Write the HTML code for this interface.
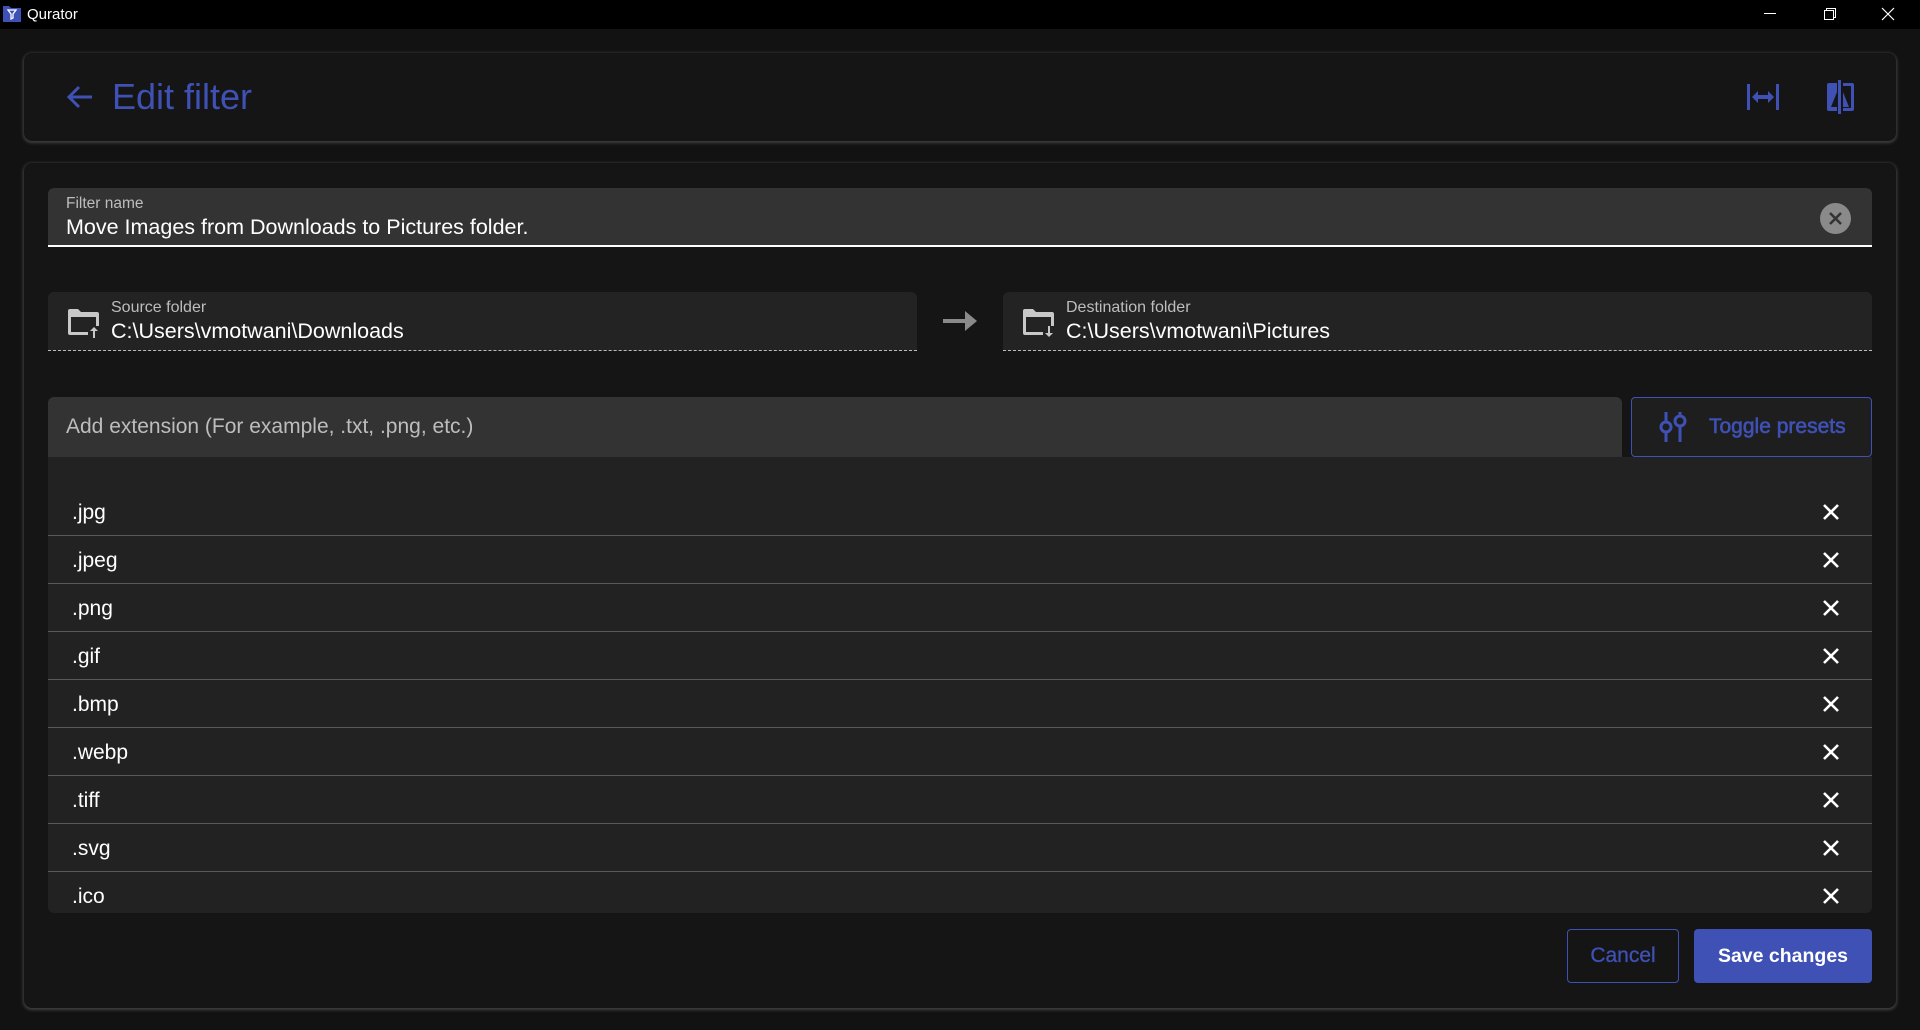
<!DOCTYPE html>
<html><head><meta charset="utf-8"><style>
*{box-sizing:border-box;margin:0;padding:0}
body{width:1920px;height:1030px;background:#121212;font-family:"Liberation Sans",sans-serif;color:#fff;position:relative;overflow:hidden}
.abs{position:absolute}
.tb{left:0;top:0;width:1920px;height:29px;background:#000}
.card{background:#151515;border-radius:8px;box-shadow:0 1px 3px 1px rgba(255,255,255,.2)}
.lbl{font-size:16px;color:#bdbdbd}
.val{font-size:21.5px;color:#fff}
.row{position:absolute;left:48px;width:1824px;height:48px;border-bottom:1px solid #5a5a5a}
.row span{position:absolute;left:24px;top:13px;font-size:21px}
.row svg{position:absolute;right:32px;top:15px}
</style></head><body>
<div class="abs tb"></div>
<svg class="abs" style="left:2px;top:3px" width="20" height="20" viewBox="0 0 20 20"><path d="M1 3h6l2 2h10v14H1z" fill="#3f51b5"/><path d="M6 7h8l-3 4v4l-2 1v-5z" fill="none" stroke="#fff" stroke-width="1.3"/></svg>
<div class="abs" style="left:27px;top:6px;font-size:15px">Qurator</div>
<div class="abs" style="left:1764px;top:13px;width:12px;height:1px;background:#fff"></div>
<svg class="abs" style="left:1823px;top:7px" width="14" height="14" viewBox="0 0 14 14" fill="none" stroke="#fff"><rect x="1.5" y="3.5" width="9" height="9"/><path d="M3.5 3.5V1.5h9v9h-2"/></svg>
<svg class="abs" style="left:1881px;top:7px" width="14" height="14" viewBox="0 0 14 14" stroke="#fff" stroke-width="1.2"><path d="M1 1l12 12M13 1L1 13"/></svg>

<div class="abs card" style="left:24px;top:53px;width:1872px;height:88px"></div>
<svg class="abs" style="left:66px;top:84px" width="28" height="26" viewBox="0 0 28 26" fill="none" stroke="#3f51b5" stroke-width="3"><path d="M26 13H4M13 3L3 13l10 10"/></svg>
<div class="abs" style="left:112px;top:76px;font-size:36px;color:#3f51b5">Edit filter</div>
<svg class="abs" style="left:1747px;top:84px" width="32" height="26" viewBox="0 0 32 26" fill="#3f51b5"><rect x="0" y="0" width="3" height="26"/><rect x="29" y="0" width="3" height="26"/><path d="M5 13l6-6v4h10V7l6 6-6 6v-4H11v4z"/></svg>
<svg class="abs" style="left:1826px;top:80px" width="30" height="34" viewBox="0 0 30 34"><path d="M11 3H3a2 2 0 0 0-2 2v24a2 2 0 0 0 2 2h8z" fill="#3f51b5"/><path d="M11 12L5 27h6z" fill="#151515"/><rect x="12" y="0" width="3" height="34" fill="#3f51b5"/><path d="M17 3h9a2 2 0 0 1 2 2v24a2 2 0 0 1-2 2h-9v-3h8V6h-8z" fill="#3f51b5"/><path d="M17 12l6 15h-6z" fill="#3f51b5"/></svg>

<div class="abs card" style="left:24px;top:163px;width:1872px;height:845px"></div>
<div class="abs" style="left:48px;top:188px;width:1824px;height:59px;background:#333;border-radius:6px 6px 0 0;border-bottom:2px solid #fff"></div>
<div class="abs lbl" style="left:66px;top:195px;font-size:15.5px">Filter name</div>
<div class="abs val" style="left:66px;top:215px">Move Images from Downloads to Pictures folder.</div>
<svg class="abs" style="left:1820px;top:203px" width="31" height="31" viewBox="0 0 31 31"><circle cx="15.5" cy="15.5" r="15.5" fill="#8a8a8a"/><path d="M10 10l11 11M21 10L10 21" stroke="#333" stroke-width="2.5"/></svg>

<div class="abs" style="left:48px;top:292px;width:869px;height:59px;background:#232323;border-radius:6px 6px 0 0;border-bottom:1px dashed #bbb"></div>
<div class="abs" style="left:1003px;top:292px;width:869px;height:59px;background:#232323;border-radius:6px 6px 0 0;border-bottom:1px dashed #bbb"></div>
<svg class="abs" style="left:68px;top:308px" width="34" height="30" viewBox="0 0 34 30" fill="#c8c8c8"><path d="M0 3a2 2 0 0 1 2-2h8l3 3h16a2 2 0 0 1 2 2v12h-3V9H3v15h17v3H2a2 2 0 0 1-2-2z"/><path d="M25 30v-7h-3l4-4 4 4h-3v7z"/></svg>
<svg class="abs" style="left:1023px;top:308px" width="34" height="30" viewBox="0 0 34 30" fill="#c8c8c8"><path d="M0 3a2 2 0 0 1 2-2h8l3 3h16a2 2 0 0 1 2 2v12h-3V9H3v15h17v3H2a2 2 0 0 1-2-2z"/><path d="M25 18v7h-3l4 4 4-4h-3v-7z"/></svg>
<div class="abs lbl" style="left:111px;top:299px;font-size:16px">Source folder</div>
<div class="abs val" style="left:111px;top:319px">C:\Users\vmotwani\Downloads</div>
<div class="abs lbl" style="left:1066px;top:299px;font-size:16px">Destination folder</div>
<div class="abs val" style="left:1066px;top:319px">C:\Users\vmotwani\Pictures</div>
<svg class="abs" style="left:943px;top:309px" width="34" height="24" viewBox="0 0 34 24" fill="#8a8a8a"><path d="M0 10h22V2l12 10-12 10v-8H0z"/></svg>

<div class="abs" style="left:48px;top:397px;width:1574px;height:60px;background:#333;border-radius:6px 6px 0 0"></div>
<div class="abs" style="left:66px;top:415px;font-size:21px;color:#bdbdbd">Add extension (For example, .txt, .png, etc.)</div>
<div class="abs" style="left:1631px;top:397px;width:241px;height:60px;background:#1e1e1e;border:1px solid #3f51b5;border-radius:4px"></div>
<svg class="abs" style="left:1658px;top:411px" width="30" height="32" viewBox="0 0 30 32" fill="none" stroke="#3f51b5" stroke-width="3"><path d="M8 1v9M8 22v9M22 1v3M22 16v15"/><circle cx="8" cy="16" r="5"/><circle cx="22" cy="10" r="5"/></svg>
<div class="abs" style="left:1709px;top:415px;font-size:21px;color:#3f51b5;-webkit-text-stroke:0.6px #3f51b5">Toggle presets</div>

<div class="abs" style="left:48px;top:457px;width:1824px;height:456px;background:#222;border-radius:0 0 6px 6px"></div>
<div class="row" style="top:488px"><span>.jpg</span><svg width="18" height="18" viewBox="0 0 18 18" stroke="#fff" stroke-width="2.6"><path d="M2 2l14 14M16 2L2 16"/></svg></div>
<div class="row" style="top:536px"><span>.jpeg</span><svg width="18" height="18" viewBox="0 0 18 18" stroke="#fff" stroke-width="2.6"><path d="M2 2l14 14M16 2L2 16"/></svg></div>
<div class="row" style="top:584px"><span>.png</span><svg width="18" height="18" viewBox="0 0 18 18" stroke="#fff" stroke-width="2.6"><path d="M2 2l14 14M16 2L2 16"/></svg></div>
<div class="row" style="top:632px"><span>.gif</span><svg width="18" height="18" viewBox="0 0 18 18" stroke="#fff" stroke-width="2.6"><path d="M2 2l14 14M16 2L2 16"/></svg></div>
<div class="row" style="top:680px"><span>.bmp</span><svg width="18" height="18" viewBox="0 0 18 18" stroke="#fff" stroke-width="2.6"><path d="M2 2l14 14M16 2L2 16"/></svg></div>
<div class="row" style="top:728px"><span>.webp</span><svg width="18" height="18" viewBox="0 0 18 18" stroke="#fff" stroke-width="2.6"><path d="M2 2l14 14M16 2L2 16"/></svg></div>
<div class="row" style="top:776px"><span>.tiff</span><svg width="18" height="18" viewBox="0 0 18 18" stroke="#fff" stroke-width="2.6"><path d="M2 2l14 14M16 2L2 16"/></svg></div>
<div class="row" style="top:824px"><span>.svg</span><svg width="18" height="18" viewBox="0 0 18 18" stroke="#fff" stroke-width="2.6"><path d="M2 2l14 14M16 2L2 16"/></svg></div>
<div class="row" style="top:872px;border-bottom:none;height:41px"><span>.ico</span><svg width="18" height="18" viewBox="0 0 18 18" stroke="#fff" stroke-width="2.6"><path d="M2 2l14 14M16 2L2 16"/></svg></div>

<div class="abs" style="left:1567px;top:929px;width:112px;height:54px;border:1px solid #3f51b5;border-radius:4px;color:#3f51b5;font-size:21px;text-align:center;line-height:52px;-webkit-text-stroke:0.3px #3f51b5">Cancel</div>
<div class="abs" style="left:1694px;top:929px;width:178px;height:54px;background:#3f51b5;border-radius:4px;color:#fff;font-size:19.5px;font-weight:bold;text-align:center;line-height:54px">Save changes</div>
</body></html>
